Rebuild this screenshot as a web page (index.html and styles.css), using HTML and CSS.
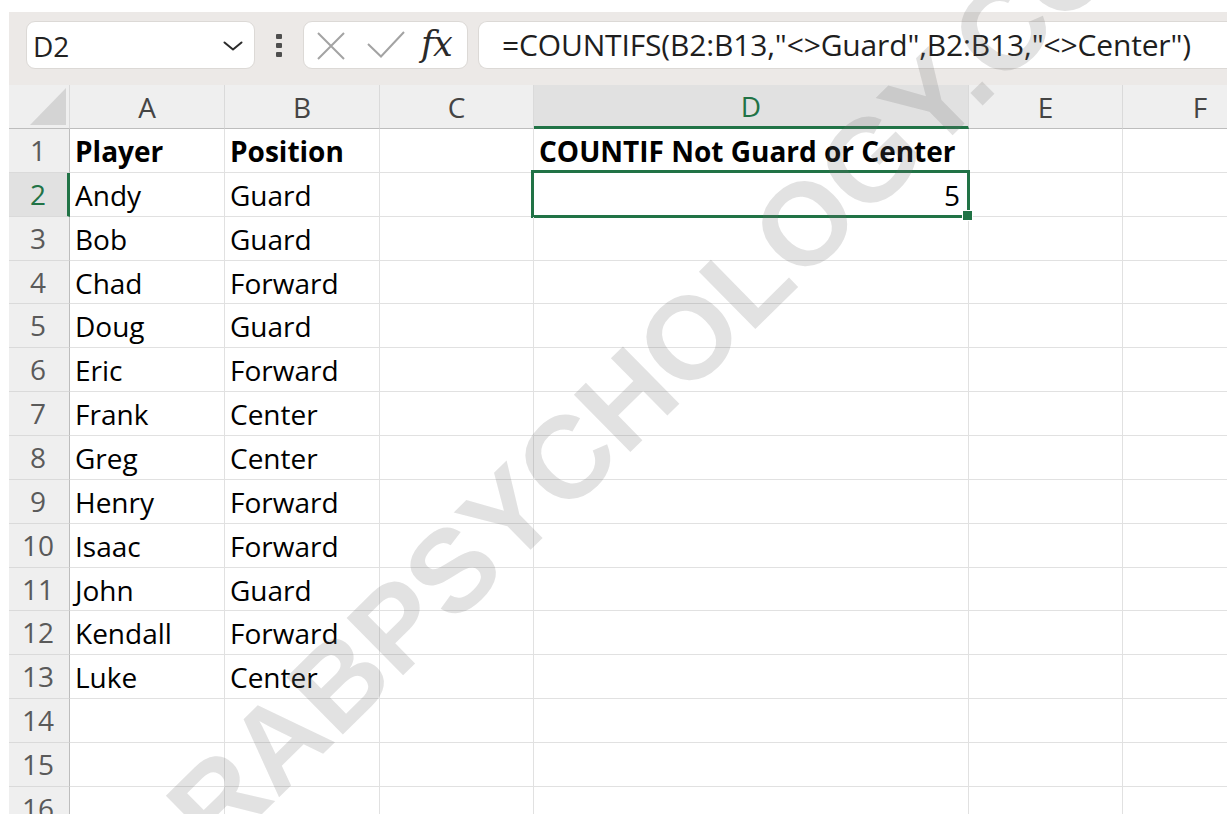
FILE: index.html
```html
<!DOCTYPE html>
<html lang="en">
<head>
<meta charset="utf-8">
<title>COUNTIFS – Not Guard or Center</title>
<link rel="stylesheet" href="styles.css">
</head>
<body>
<div class="screen">
  <div class="app">
    <div class="toolbar">
      <div class="namebox">
        <span class="ref">D2</span>
        <svg class="chev" width="20" height="10" viewBox="0 0 20 10"><path d="M1.5 1.5 L10 8.5 L18.5 1.5" fill="none" stroke="#2b2b2b" stroke-width="2" stroke-linecap="round" stroke-linejoin="round"/></svg>
      </div>
      <div class="grip"><i></i><i></i><i></i></div>
      <div class="fxbox">
        <svg class="cancel" width="28" height="28" viewBox="0 0 28 28"><path d="M1 1 L27 27 M27 1 L1 27" stroke="#a3a3a3" stroke-width="2" fill="none"/></svg>
        <svg class="enter" width="38" height="28" viewBox="0 0 38 28"><path d="M1 13 L14 25.5 L37 1" stroke="#a3a3a3" stroke-width="2" fill="none"/></svg>
        <span class="fx">fx</span>
      </div>
      <div class="formula">=COUNTIFS(B2:B13,"&lt;&gt;Guard",B2:B13,"&lt;&gt;Center")</div>
    </div>

    <div class="sheet">
      <div class="corner"></div>
      <div class="ch">A</div><div class="ch">B</div><div class="ch">C</div><div class="ch active">D</div><div class="ch">E</div><div class="ch">F</div>

      <div class="rh">1</div><div class="c b">Player</div><div class="c b">Position</div><div class="c"></div><div class="c b">COUNTIF Not Guard or Center</div><div class="c"></div><div class="c"></div>
      <div class="rh active">2</div><div class="c">Andy</div><div class="c">Guard</div><div class="c"></div><div class="c num selected">5</div><div class="c"></div><div class="c"></div>
      <div class="rh">3</div><div class="c">Bob</div><div class="c">Guard</div><div class="c"></div><div class="c"></div><div class="c"></div><div class="c"></div>
      <div class="rh">4</div><div class="c">Chad</div><div class="c">Forward</div><div class="c"></div><div class="c"></div><div class="c"></div><div class="c"></div>
      <div class="rh">5</div><div class="c">Doug</div><div class="c">Guard</div><div class="c"></div><div class="c"></div><div class="c"></div><div class="c"></div>
      <div class="rh">6</div><div class="c">Eric</div><div class="c">Forward</div><div class="c"></div><div class="c"></div><div class="c"></div><div class="c"></div>
      <div class="rh">7</div><div class="c">Frank</div><div class="c">Center</div><div class="c"></div><div class="c"></div><div class="c"></div><div class="c"></div>
      <div class="rh">8</div><div class="c">Greg</div><div class="c">Center</div><div class="c"></div><div class="c"></div><div class="c"></div><div class="c"></div>
      <div class="rh">9</div><div class="c">Henry</div><div class="c">Forward</div><div class="c"></div><div class="c"></div><div class="c"></div><div class="c"></div>
      <div class="rh">10</div><div class="c">Isaac</div><div class="c">Forward</div><div class="c"></div><div class="c"></div><div class="c"></div><div class="c"></div>
      <div class="rh">11</div><div class="c">John</div><div class="c">Guard</div><div class="c"></div><div class="c"></div><div class="c"></div><div class="c"></div>
      <div class="rh">12</div><div class="c">Kendall</div><div class="c">Forward</div><div class="c"></div><div class="c"></div><div class="c"></div><div class="c"></div>
      <div class="rh">13</div><div class="c">Luke</div><div class="c">Center</div><div class="c"></div><div class="c"></div><div class="c"></div><div class="c"></div>
      <div class="rh">14</div><div class="c"></div><div class="c"></div><div class="c"></div><div class="c"></div><div class="c"></div><div class="c"></div>
      <div class="rh">15</div><div class="c"></div><div class="c"></div><div class="c"></div><div class="c"></div><div class="c"></div><div class="c"></div>
      <div class="rh">16</div><div class="c"></div><div class="c"></div><div class="c"></div><div class="c"></div><div class="c"></div><div class="c"></div>
    </div>
  </div>
  <div class="watermark">ARABPSYCHOLOGY.COM</div>
</div>
</body>
</html>
```

FILE: styles.css
```css
* { box-sizing: border-box; }

html, body {
  margin: 0;
  padding: 0;
  background: #fff;
  overflow: hidden;
}

.screen {
  position: relative;
  width: 1227px;
  height: 814px;
  overflow: hidden;
  background: #fff;
  font-family: "Open Sans", "Noto Sans", sans-serif;
  color: #000;
}

.app {
  margin: 12px 0 0 9px;
}

/* ---- formula bar ---- */
.toolbar {
  height: 73px;
  background: #ece9e7;
  display: flex;
  align-items: flex-start;
  padding: 9px 0 0 17px;
  white-space: nowrap;
  overflow: hidden;
}

.namebox,
.fxbox,
.formula {
  height: 48px;
  background: #fff;
  border: 1px solid #dcd9d6;
  border-radius: 9px;
  flex: none;
}

.namebox {
  width: 229px;
  display: flex;
  align-items: center;
  justify-content: space-between;
  padding: 2px 11px 0 6px;
}

.namebox .ref {
  font-size: 28px;
  color: #222;
  line-height: 1;
}

.chev { margin-top: -1px; }

.grip {
  width: 6px;
  margin: 13px 21px 0 21px;
  display: flex;
  flex-direction: column;
  gap: 4px;
}

.grip i {
  display: block;
  width: 6px;
  height: 5px;
  border-radius: 1px;
  background: #4e4e4e;
}

.fxbox {
  width: 165px;
  display: flex;
  align-items: center;
  padding-left: 13px;
}

.fxbox .cancel { margin-top: 2px; }
.fxbox .enter { margin-left: 22px; }

.fxbox .fx {
  margin-left: 16px;
  font-family: "DejaVu Serif", "Liberation Serif", serif;
  font-style: italic;
  font-size: 35px;
  line-height: 1;
  color: #2a2a2a;
  margin-top: -2px;
  letter-spacing: -1px;
}

.formula {
  margin-left: 10px;
  width: 820px;
  border-right: none;
  border-radius: 9px 0 0 9px;
  padding: 0 0 0 23px;
  font-size: 30px;
  letter-spacing: -0.15px;
  line-height: 45px;
  color: #1e1e1e;
}

/* ---- grid ---- */
.sheet {
  display: grid;
  grid-template-columns: 61px 155px 155px 154px 435px 154px 155px;
  grid-template-rows: 44px;
  grid-auto-rows: 43.86px;
  width: 1269px;
  font-size: 28px;
}

.corner {
  position: relative;
  background: #efefef;
  border-right: 1px solid #dadada;
  border-bottom: 1px solid #bdbdbd;
}

.corner::after {
  content: "";
  position: absolute;
  left: 21px;
  top: 3px;
  width: 36px;
  height: 37px;
  background: #d4d4d4;
  clip-path: polygon(100% 0, 100% 100%, 0 100%);
}

.ch {
  background: #efefef;
  border-right: 1px solid #dadada;
  border-bottom: 1px solid #bdbdbd;
  color: #444;
  text-align: center;
  line-height: 44px;
}

.ch.active {
  background: #e1e1e1;
  color: #217346;
  border-bottom: 3px solid #217346;
  line-height: 43px;
}

.rh {
  background: #efefef;
  border-right: 1px solid #bdbdbd;
  border-bottom: 1px solid #dadada;
  color: #5a5a5a;
  text-align: center;
  line-height: 43px;
  padding-right: 2px;
}

.rh.active {
  background: #e1e1e1;
  color: #217346;
  border-right: 3px solid #217346;
  padding-right: 0;
}

.c {
  border-right: 1px solid #e1e1e1;
  border-bottom: 1px solid #e1e1e1;
  padding: 1px 7px 0 5px;
  line-height: 42px;
  white-space: nowrap;
  overflow: visible;
  position: relative;
}

.c.b { font-weight: 700; padding-left: 5px; }

.c.num { text-align: right; padding-right: 8px; }

/* active cell outline with its fill handle */
.c.selected::after {
  content: "";
  position: absolute;
  left: -3px;
  top: -3px;
  right: -2px;
  bottom: -2px;
  border: 3px solid #217346;
  pointer-events: none;
}

.c.selected::before {
  content: "";
  position: absolute;
  right: -5px;
  bottom: -5px;
  width: 9px;
  height: 9px;
  background: #217346;
  border: 1px solid #fff;
  z-index: 2;
}

/* site watermark across the page */
.watermark {
  position: absolute;
  left: 87px;
  top: 847px;
  transform-origin: 0 0;
  transform: rotate(-44.5deg);
  font-family: "Liberation Sans", Arial, sans-serif;
  font-weight: 700;
  font-size: 117px;
  line-height: 1;
  white-space: nowrap;
  color: rgba(110, 110, 110, 0.2);
  pointer-events: none;
}
```
